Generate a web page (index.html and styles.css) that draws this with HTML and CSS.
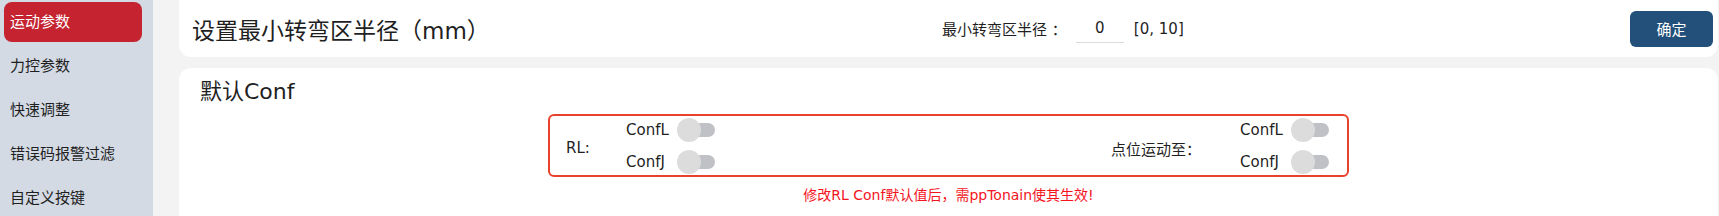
FILE: index.html
```html
<!DOCTYPE html>
<html lang="zh-CN">
<head>
    <meta charset="UTF-8">
    <title>运动参数</title>
    <link rel="stylesheet" href="styles.css">
</head>
<body>

<div class="layout">
    <aside class="sidebar">
        <div class="nav-item active">运动参数</div>
        <div class="nav-item">力控参数</div>
        <div class="nav-item">快速调整</div>
        <div class="nav-item">错误码报警过滤</div>
        <div class="nav-item">自定义按键</div>
    </aside>

    <main class="main">
        <section class="card card-top">
            <h2 class="page-title">设置最小转弯区半径（mm）</h2>
            <div class="radius-field">
                <label for="radius">最小转弯区半径 ：</label>
                <input id="radius" class="num-input" type="text" value="0">
                <span class="range">[0, 10]</span>
            </div>
            <button class="btn-primary">确定</button>
        </section>

        <section class="card card-conf">
            <h3 class="conf-title">默认Conf</h3>
            <div class="conf-box">
                <div class="conf-group">
                    <span class="group-label">RL:</span>
                    <div class="switch-list">
                        <div class="switch-row"><span class="switch-name">ConfL</span><span class="switch"></span></div>
                        <div class="switch-row"><span class="switch-name">ConfJ</span><span class="switch"></span></div>
                    </div>
                </div>
                <div class="conf-group">
                    <span class="group-label wide">点位运动至：</span>
                    <div class="switch-list">
                        <div class="switch-row"><span class="switch-name">ConfL</span><span class="switch"></span></div>
                        <div class="switch-row"><span class="switch-name">ConfJ</span><span class="switch"></span></div>
                    </div>
                </div>
            </div>
            <p class="conf-tip">修改RL Conf默认值后，需ppTonain使其生效!</p>
        </section>
    </main>
</div>

</body>
</html>
```

FILE: styles.css
```css
body {
    margin: 0;
    padding: 0;
    background-color: #f3f3f3;
    color: #1f1f1f;
    font-family: "DejaVu Sans", "Noto Sans CJK SC", sans-serif;
    overflow: hidden;
}

.layout {
    display: flex;
    height: 216px;
}

.sidebar {
    width: 153px;
    flex-shrink: 0;
    background-color: #d3dae4;
    padding: 2px 0 0 4px;
    box-sizing: border-box;
    display: flex;
    flex-direction: column;
    gap: 4px;
}

.nav-item {
    width: 138px;
    height: 40px;
    line-height: 40px;
    padding-left: 6px;
    box-sizing: border-box;
    font-size: 15px;
    border-radius: 8px;
}

.nav-item.active {
    background-color: #c4232f;
    color: #fff;
}

.main {
    flex: 1;
    display: flex;
    flex-direction: column;
    padding: 0 1px 0 26px;
    gap: 11px;
}

.card {
    background-color: #fff;
    border-radius: 12px;
}

.card-top {
    height: 57px;
    flex-shrink: 0;
    border-radius: 0 0 12px 12px;
    display: flex;
    align-items: center;
    justify-content: space-between;
    padding: 0 5px 0 13px;
}

.page-title {
    margin: 0;
    font-size: 23px;
    font-weight: normal;
}

.radius-field {
    display: flex;
    align-items: center;
    font-size: 15px;
    margin-left: 6px;
}

.num-input {
    width: 48px;
    height: 28px;
    margin-left: 9px;
    padding: 0;
    border: none;
    border-bottom: 1px solid #dcdcdc;
    outline: none;
    text-align: center;
    font-family: inherit;
    font-size: 15px;
    color: #1f1f1f;
}

.range {
    margin-left: 10px;
}

.btn-primary {
    width: 83px;
    height: 36px;
    border: none;
    border-radius: 6px;
    background-color: #22507a;
    color: #fff;
    font-family: inherit;
    font-size: 15px;
    cursor: pointer;
}

.card-conf {
    flex: 1;
    border-radius: 12px 12px 0 0;
}

.conf-title {
    margin: 12px 0 0 21px;
    font-size: 22px;
    font-weight: normal;
    line-height: 24px;
}

.conf-box {
    width: 801px;
    box-sizing: border-box;
    margin: 10px auto 0;
    border: 2px solid #e8432a;
    border-radius: 6px;
    padding: 1px 18px 0 16px;
    display: flex;
    justify-content: space-between;
    align-items: center;
}

.conf-group {
    display: flex;
    align-items: center;
    font-size: 15px;
}

.group-label {
    width: 60px;
    padding-top: 4px;
}

.group-label.wide {
    width: 129px;
}

.switch-list {
    display: flex;
    flex-direction: column;
    gap: 6px;
}

.switch-row {
    height: 26px;
    display: flex;
    align-items: center;
}

.switch-name {
    width: 51px;
}

.switch {
    position: relative;
    width: 38px;
    height: 24px;
}

.switch::before {
    content: "";
    position: absolute;
    left: 6px;
    right: 0;
    top: 5px;
    height: 14px;
    border-radius: 7px;
    background-color: #bfc1c6;
}

.switch::after {
    content: "";
    position: absolute;
    left: 0;
    top: 0;
    width: 24px;
    height: 24px;
    border-radius: 50%;
    background-color: #dcdcdc;
}

.conf-tip {
    margin: 8px 0 0;
    text-align: center;
    font-size: 14px;
    line-height: 20px;
    color: #f5141e;
}
```
